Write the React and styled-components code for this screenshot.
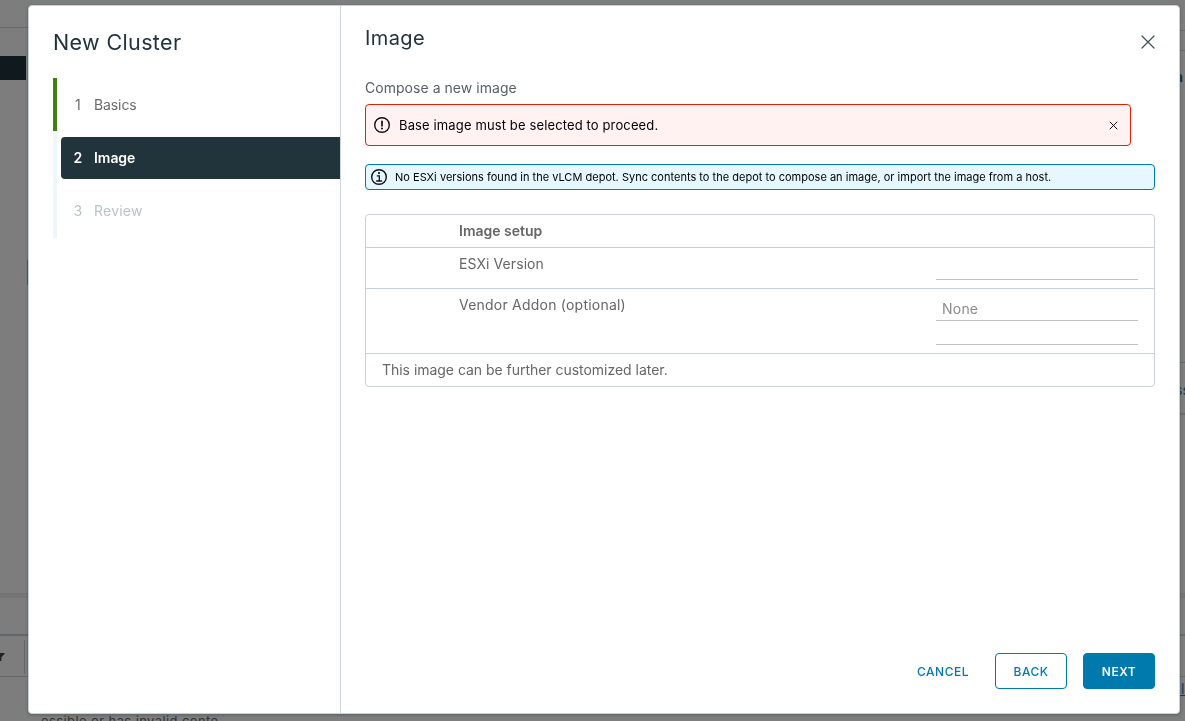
import React from "react";
import styled, { createGlobalStyle, css } from "styled-components";

const GlobalStyle = createGlobalStyle`
  * { box-sizing: border-box; }
  body {
    margin: 0;
    overflow: hidden;
    font-family: Inter, "Open Sans", sans-serif;
    color: #666;
  }
  button { font-family: inherit; cursor: pointer; }
`;

const Page = styled.div`
  display: flex;
  justify-content: space-between;
  height: 721px;
  background: #7d7d7d;
`;

const EdgeColumn = styled.div`
  display: flex;
  flex-direction: column;
  width: ${(p) => p.$width}px;
  flex: none;
  overflow: hidden;
`;

const Band = styled.div`
  flex: none;
  align-self: ${(p) => (p.$end ? "flex-end" : "flex-start")};
  height: ${(p) => p.$h}px;
  width: ${(p) => (p.$w ? `${p.$w}px` : "100%")};
  background: ${(p) => p.$c || "transparent"};
`;

const FilterBand = styled.div`
  display: flex;
  align-items: center;
  justify-content: space-between;
  flex: none;
  height: 40px;
  padding-right: 3px;
  border-bottom: 1px solid #626668;
`;

const FilterRule = styled.div`
  width: 1px;
  height: 34px;
  background: #62676a;
`;

const Clipped = styled.div`
  flex: none;
  height: ${(p) => p.$h}px;
  line-height: ${(p) => p.$h}px;
  font-size: 14px;
  font-weight: ${(p) => p.$weight || 400};
  color: ${(p) => p.$color};
  text-indent: ${(p) => p.$indent || 0}px;
  white-space: nowrap;
  overflow: hidden;
  ${(p) => p.$underline && css`border-bottom: 1px solid #04415a;`}
`;

const BackgroundMain = styled.div`
  flex: 1;
  display: flex;
  align-items: flex-end;
  min-width: 0;
`;

const TruncatedRow = styled.div`
  height: 8px;
  padding-left: 13px;
  overflow: hidden;
  font-size: 13px;
  line-height: 17px;
  letter-spacing: 0.4px;
  color: #333;
  white-space: nowrap;
`;

const Modal = styled.div`
  position: fixed;
  top: 5px;
  left: 28px;
  display: flex;
  width: 1152px;
  height: 709px;
  background: #fff;
  border: 1px solid #c5d1d8;
  border-radius: 4px;
  box-shadow: 0 1px 2px 1px rgba(60, 64, 66, 0.3);
`;

const SideNav = styled.aside`
  width: 312px;
  flex: none;
  padding: 24px 0 0 24px;
  border-right: 1px solid #ccd5db;
`;

const WizardTitle = styled.h3`
  margin: 0;
  height: 24px;
  line-height: 24px;
  font-size: 21.5px;
  font-weight: 400;
  letter-spacing: 0.36px;
  color: #21333b;
`;

const StepList = styled.ol`
  margin: 24px 0 0;
  padding: 0;
  list-style: none;
`;

const Step = styled.li`
  height: 53px;
  padding: 6px 0 5px 4px;
  border-left: 4px solid ${(p) => (p.$state === "done" ? "#42810e" : "#eff6f9")};
  &:last-child { height: 54px; padding-bottom: 6px; }
`;

const StepLink = styled.div`
  display: flex;
  align-items: center;
  height: 42px;
  padding: 0 0 2px 12.5px;
  border-radius: 4px 0 0 4px;
  font-size: 14px;
  color: #6a6a6a;
  letter-spacing: -0.1px;
  ${(p) => p.$state === "current" && css`
    background: #21333b;
    color: #fff;
    font-weight: 600;
    letter-spacing: -0.05px;
  `}
  ${(p) => p.$state === "todo" && css`
    color: #bcc3c7;
    letter-spacing: 0.22px;
  `}
`;

const StepNumber = styled.span`
  width: 20.5px;
  text-align: left;
  text-indent: ${(p) => p.$indent || 0}px;
`;

const Content = styled.main`
  display: flex;
  flex-direction: column;
  flex: 1;
  padding: 20px 24px 24px;
`;

const ContentHeader = styled.header`
  display: flex;
  justify-content: space-between;
  height: 56px;
`;

const PageTitle = styled.h3`
  margin: 0;
  height: 24px;
  line-height: 24px;
  font-size: 20px;
  font-weight: 400;
  letter-spacing: 0.4px;
  color: #21333b;
`;

const IconButton = styled.button`
  display: flex;
  padding: 0;
  border: 0;
  background: transparent;
  align-self: ${(p) => (p.$top ? "flex-start" : "center")};
  margin: ${(p) => (p.$top ? "9px 0 0" : "0")};
`;

const Lead = styled.p`
  margin: 0;
  height: 22px;
  line-height: 12px;
  font-size: 14px;
  letter-spacing: 0.04px;
  color: #565f64;
`;

const Alert = styled.div`
  display: flex;
  align-items: center;
  flex: none;
  color: #000;
  border: 1px solid;
  border-radius: 4px;
  ${(p) => p.$kind === "error" ? css`
    width: 766px;
    height: 42px;
    padding: 0 12px 0 8px;
    gap: 9px;
    border-color: #e12200;
    background: #fff2f0;
    font-size: 13px;
    letter-spacing: 0.13px;
  ` : css`
    height: 26px;
    margin-top: 18px;
    padding: 0 5px;
    gap: 8px;
    border-color: #0079ad;
    background: #e6f7ff;
    font-size: 11px;
    letter-spacing: 0.012px;
  `}
`;

const AlertText = styled.span`
  flex: 1;
  white-space: nowrap;
`;

const Setup = styled.section`
  margin-top: 24px;
  height: 173px;
  flex: none;
  border: 1px solid #c5d2d9;
  border-radius: 4px;
  font-size: 14px;
  color: #666;
`;

const SetupRow = styled.div`
  display: flex;
  justify-content: space-between;
  height: ${(p) => p.$h}px;
  padding: 0 16px 0 ${(p) => (p.$full ? 16 : 93)}px;
  line-height: 32px;
  font-weight: ${(p) => (p.$heading ? 600 : 400)};
  letter-spacing: ${(p) => p.$track || 0}px;
  border-bottom: 1px solid #c5d2d9;
  &:last-child { border-bottom: 0; }
`;

const Fields = styled.div`
  display: flex;
  flex-direction: column;
  justify-content: flex-end;
  width: 202px;
  padding-bottom: 8px;
`;

const Field = styled.div`
  height: 24px;
  padding-left: 6px;
  line-height: 24px;
  font-size: 14px;
  color: #8c8c8c;
  border-bottom: 1px solid #bfc3c5;
`;

const Footer = styled.footer`
  display: flex;
  justify-content: flex-end;
  margin-top: auto;
  gap: 16px;
`;

const Button = styled.button`
  height: 36px;
  width: ${(p) => p.$w}px;
  padding: 0;
  border: 1px solid ${(p) => (p.$kind === "link" ? "transparent" : "#0079ad")};
  border-radius: 4px;
  background: ${(p) => (p.$kind === "primary" ? "#0079ad" : "transparent")};
  color: ${(p) => (p.$kind === "primary" ? "#fff" : "#0079ad")};
  font-size: 12px;
  font-weight: ${(p) => (p.$kind === "primary" ? 600 : 500)};
  letter-spacing: 0.5px;
  text-align: center;
`;

const Close = ({ size, color, stroke = 1 }) => (
  <svg width={size} height={size} viewBox={`0 0 ${size} ${size}`} fill="none" stroke={color} strokeWidth={stroke} strokeLinecap="round">
    <path d={`M1 1L${size - 1} ${size - 1}M${size - 1} 1L1 ${size - 1}`} />
  </svg>
);

const ErrorIcon = () => (
  <svg width="16" height="16" viewBox="0 0 16 16" fill="none" stroke="#111">
    <circle cx="8" cy="8" r="7.3" strokeWidth="1.4" />
    <path d="M8 4.3v4.5" strokeWidth="1.7" strokeLinecap="round" />
    <circle cx="8" cy="11.4" r="1" fill="#111" stroke="none" />
  </svg>
);

const InfoIcon = () => (
  <svg width="16" height="16" viewBox="0 0 16 16" fill="none" stroke="#111">
    <circle cx="8" cy="8" r="7.3" strokeWidth="1.4" />
    <path d="M6.3 6.9H8.3V12M5.7 12H10.6" strokeWidth="1.3" strokeLinecap="round" />
    <circle cx="8" cy="4.1" r="1.1" fill="#111" stroke="none" />
  </svg>
);

const FilterIcon = () => (
  <svg width="5" height="8" viewBox="0 0 5 8">
    <path d="M0 0H4.5V1L1.4 4.2V8H0Z" fill="#222" />
  </svg>
);

const steps = [
  { label: "Basics", state: "done" },
  { label: "Image", state: "current" },
  { label: "Review", state: "todo" },
];

function Background() {
  return (
    <Page>
      <EdgeColumn $width={28}>
        <Band $h={27} />
        <Band $h={1} $c="#686a6b" />
        <Band $h={28} />
        <Band $h={24} $w={26} $c="#10191e" />
        <Band $h={180} />
        <Band $h={25} $w={1} $end $c="#4c5459" />
        <Band $h={308} />
        <Band $h={5} $c="#747474" />
        <Band $h={36} />
        <Band $h={2} $c="#61676a" />
        <Band $h={1} />
        <FilterBand>
          <FilterIcon />
          <FilterRule />
        </FilterBand>
      </EdgeColumn>
      <BackgroundMain>
        <TruncatedRow>essible or has invalid conte...</TruncatedRow>
      </BackgroundMain>
      <EdgeColumn $width={5}>
        <Band $h={30} />
        <Band $h={1} $c="#686a6b" />
        <Band $h={19} />
        <Band $h={1} $c="#686a6b" />
        <Band $h={17} />
        <Clipped $h={18} $weight={600} $color="#112a3a" $indent={-5}>a</Clipped>
        <Band $h={276} />
        <Band $h={1} $c="#62676a" />
        <Band $h={18} />
        <Clipped $h={18} $color="#003e59" $indent={-5}>ss</Clipped>
        <Band $h={14} />
        <Band $h={2} $c="#686a6b" />
        <Band $h={178} />
        <Band $h={5} $c="#747474" />
        <Band $h={36} />
        <Band $h={2} $c="#676b6d" />
        <Band $h={40} />
        <Band $h={1} $c="#676b6d" />
        <Band $h={4} />
        <Clipped $h={15} $color="#003e59" $indent={1} $underline>l</Clipped>
      </EdgeColumn>
    </Page>
  );
}

export default function App() {
  return (
    <>
      <GlobalStyle />
      <Background />
      <Modal role="dialog">
        <SideNav>
          <WizardTitle>New Cluster</WizardTitle>
          <StepList>
            {steps.map((s, i) => (
              <Step key={s.label} $state={s.state}>
                <StepLink $state={s.state}>
                  <StepNumber $indent={i === 0 ? 1.5 : 0}>{i + 1}</StepNumber>
                  <span>{s.label}</span>
                </StepLink>
              </Step>
            ))}
          </StepList>
        </SideNav>
        <Content>
          <ContentHeader>
            <PageTitle>Image</PageTitle>
            <IconButton $top aria-label="Close"><Close size={14} color="#42525a" stroke={1.3} /></IconButton>
          </ContentHeader>
          <Lead>Compose a new image</Lead>
          <Alert $kind="error">
            <ErrorIcon />
            <AlertText>Base image must be selected to proceed.</AlertText>
            <IconButton aria-label="Dismiss"><Close size={9} color="#111" /></IconButton>
          </Alert>
          <Alert $kind="info">
            <InfoIcon />
            <AlertText>No ESXi versions found in the vLCM depot. Sync contents to the depot to compose an image, or import the image from a host.</AlertText>
          </Alert>
          <Setup>
            <SetupRow $h={33} $heading>Image setup</SetupRow>
            <SetupRow $h={41} $track={0.08}>
              <span>ESXi Version</span>
              <Fields><Field /></Fields>
            </SetupRow>
            <SetupRow $h={65} $track={0.22}>
              <span>Vendor Addon (optional)</span>
              <Fields><Field>None</Field><Field /></Fields>
            </SetupRow>
            <SetupRow $h={32} $full $track={-0.03}>This image can be further customized later.</SetupRow>
          </Setup>
          <Footer>
            <Button $kind="link" $w={72}>CANCEL</Button>
            <Button $w={72}>BACK</Button>
            <Button $kind="primary" $w={72}>NEXT</Button>
          </Footer>
        </Content>
      </Modal>
    </>
  );
}
